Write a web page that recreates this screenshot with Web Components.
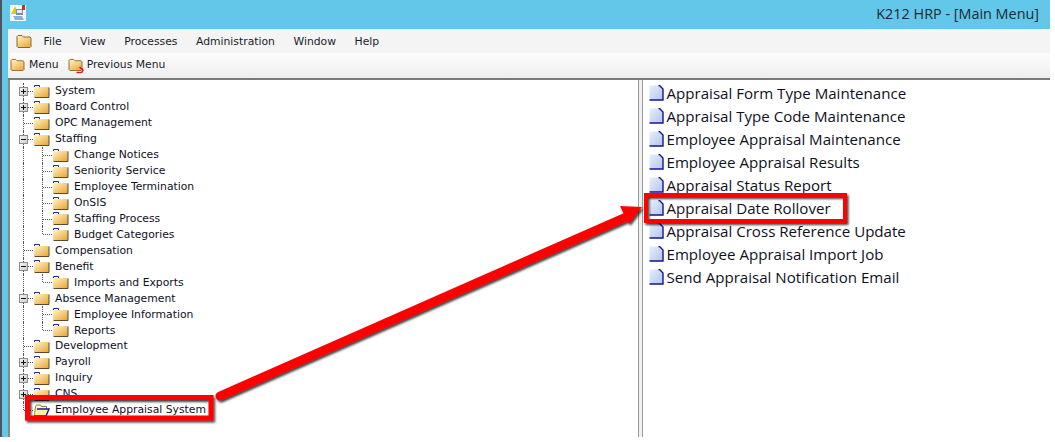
<!DOCTYPE html>
<html>
<head>
<meta charset="utf-8">
<title>K212 HRP - [Main Menu]</title>
<style>
  html, body { margin: 0; padding: 0; background: #fff; }
  body { width: 1055px; height: 442px; overflow: hidden; }
</style>
</head>
<body>
<hr-window>
  <hr-titlebar slot="title">K212 HRP - [Main Menu]</hr-titlebar>
  <hr-menubar slot="menu">
    <span>File</span><span>View</span><span>Processes</span><span>Administration</span><span>Window</span><span>Help</span>
  </hr-menubar>
  <hr-toolbar slot="tools"></hr-toolbar>
  <hr-tree slot="left">
    <tree-node expander="plus" label="System"></tree-node>
    <tree-node expander="plus" label="Board Control"></tree-node>
    <tree-node label="OPC Management"></tree-node>
    <tree-node expander="minus" label="Staffing"></tree-node>
    <tree-node level="1" label="Change Notices"></tree-node>
    <tree-node level="1" label="Seniority Service"></tree-node>
    <tree-node level="1" label="Employee Termination"></tree-node>
    <tree-node level="1" label="OnSIS"></tree-node>
    <tree-node level="1" label="Staffing Process"></tree-node>
    <tree-node level="1" last label="Budget Categories"></tree-node>
    <tree-node label="Compensation"></tree-node>
    <tree-node expander="minus" label="Benefit"></tree-node>
    <tree-node level="1" last label="Imports and Exports"></tree-node>
    <tree-node expander="minus" label="Absence Management"></tree-node>
    <tree-node level="1" label="Employee Information"></tree-node>
    <tree-node level="1" last label="Reports"></tree-node>
    <tree-node label="Development"></tree-node>
    <tree-node expander="plus" label="Payroll"></tree-node>
    <tree-node expander="plus" label="Inquiry"></tree-node>
    <tree-node expander="plus" label="CNS"></tree-node>
    <tree-node last open label="Employee Appraisal System"></tree-node>
  </hr-tree>
  <hr-list slot="right">
    <list-item>Appraisal Form Type Maintenance</list-item>
    <list-item>Appraisal Type Code Maintenance</list-item>
    <list-item>Employee Appraisal Maintenance</list-item>
    <list-item>Employee Appraisal Results</list-item>
    <list-item>Appraisal Status Report</list-item>
    <list-item>Appraisal Date Rollover</list-item>
    <list-item>Appraisal Cross Reference Update</list-item>
    <list-item>Employee Appraisal Import Job</list-item>
    <list-item>Send Appraisal Notification Email</list-item>
  </hr-list>
</hr-window>
<hr-annotations></hr-annotations>

<script>
const UI_FONT = '"DejaVu Sans", "Liberation Sans", sans-serif';

// shared folder drawing for the menu and toolbar
function folderSvg(w, h) {
    return `<svg width="${w}" height="${h}" viewBox="0 0 16 14">
        <defs><linearGradient id="fg" x1="0" y1="0" x2="0.6" y2="1">
            <stop offset="0" stop-color="#fff6c4"/><stop offset="1" stop-color="#eeb04a"/>
        </linearGradient></defs>
        <path d="M1 12.5V2.5L2 1.5H6L7.5 3H14L15 4V12.5L14 13.5H2Z" fill="url(#fg)" stroke="#8a6a2c" stroke-width="1"/>
    </svg>`;
}

class HrWindow extends HTMLElement {
    constructor() {
        super();
        this.attachShadow({ mode: 'open' });
        this.shadowRoot.innerHTML = `
        <style>
        :host { display: flex; flex-direction: column; width: 1050px; height: 437px; background: #63c7ea; border-left: 2px solid #4a5560; box-sizing: border-box; }
        .body { flex: 1; min-height: 0; margin-left: 6px; display: flex; flex-direction: column; background: #f0f0f0; }
        .panes { flex: 1; min-height: 0; display: flex; border-top: 2px solid #7a7a7a; background: #f0f0f0; }
        .left { width: 630px; flex: none; border-left: 2px solid #8a8a8a; background: #fff; box-sizing: border-box; }
        .split { width: 5px; flex: none; background: #f0f0f0; border-left: 1px solid #9a9a9a; border-right: 1px solid #9a9a9a; box-sizing: border-box; }
        .right { flex: 1; background: #fff; }
        </style>
        <slot name="title"></slot>
        <div class="body">
            <slot name="menu"></slot>
            <slot name="tools"></slot>
            <div class="panes">
                <div class="left"><slot name="left"></slot></div>
                <div class="split"></div>
                <div class="right"><slot name="right"></slot></div>
            </div>
        </div>
        `;
    }
}

class HrTitlebar extends HTMLElement {
    constructor() {
        super();
        this.attachShadow({ mode: 'open' });
        this.shadowRoot.innerHTML = `
        <style>
        :host { display: flex; align-items: center; justify-content: flex-end; height: 29px; flex: none; box-sizing: border-box; padding: 0 11px 3px 8px; font: 14.4px "Open Sans", ${UI_FONT}; color: #1a2a30; }
        svg { margin-right: auto; }
        </style>
        <svg width="16" height="16" viewBox="0 0 16 16">
            <rect width="16" height="16" fill="#f4fafd"/>
            <path d="M1 9L5 1L8 9Z" fill="#d9c92e"/>
            <rect x="6" y="4" width="7" height="6" fill="#7a8fa8"/>
            <rect x="7" y="5" width="5" height="3" fill="#e9eef5"/>
            <path d="M12 0h3v5h-3z" fill="#d8262a"/>
            <path d="M3 11h9l2 4H5z" fill="#7fb2e6"/>
        </svg>
        <slot></slot>
        `;
    }
}

class HrMenubar extends HTMLElement {
    constructor() {
        super();
        this.attachShadow({ mode: 'open' });
        this.shadowRoot.innerHTML = `
        <style>
        :host { display: flex; align-items: center; height: 24px; flex: none; gap: 18.5px; padding-left: 8px; background: #f4f4f4; font: 10.8px ${UI_FONT}; color: #1c1c2c; }
        svg { margin-right: -7px; }
        </style>
        ${folderSvg(16, 14)}
        <slot></slot>
        `;
    }
}

class HrToolbar extends HTMLElement {
    constructor() {
        super();
        this.attachShadow({ mode: 'open' });
        this.shadowRoot.innerHTML = `
        <style>
        :host { display: flex; align-items: center; height: 25px; flex: none; box-sizing: border-box; padding: 0 0 2px 2px; background: linear-gradient(#fdfdfd, #eeeeee); font: 10.8px ${UI_FONT}; color: #1c1c2c; }
        .btn { display: flex; align-items: center; gap: 4px; margin-right: 9px; position: relative; }
        .undo { position: absolute; left: 7px; top: 7px; }
        </style>
        <div class="btn">${folderSvg(15, 13)}<span>Menu</span></div>
        <div class="btn">
            ${folderSvg(15, 13)}
            <svg class="undo" width="9" height="9" viewBox="0 0 9 9"><path d="M1.5 7.5H5.5A2 2 0 0 0 6 3.5L4.5 2" fill="none" stroke="#e0181c" stroke-width="1.6"/></svg>
            <span>Previous Menu</span>
        </div>
        `;
    }
}

class HrTree extends HTMLElement {
    constructor() {
        super();
        this.attachShadow({ mode: 'open' });
        this.shadowRoot.innerHTML = `
        <style>
        :host { display: flex; flex-direction: column; padding: 3px 0 0 4px; font: 10.8px ${UI_FONT}; color: #10101c; }
        </style>
        <slot></slot>
        `;
    }
}

class TreeNode extends HTMLElement {
    constructor() {
        super();
        this.attachShadow({ mode: 'open' });
    }

    connectedCallback() {
        const level = parseInt(this.getAttribute('level') || '0');
        const expander = this.getAttribute('expander');
        const last = this.hasAttribute('last');
        const open = this.hasAttribute('open');

        let cells = '';
        if (level === 1) {
            cells += '<div class="cell"><i class="v"></i></div>';
        }
        cells += `<div class="cell">
            <i class="v ${last ? 'half' : ''}"></i><i class="h"></i>
            ${expander ? `<b class="exp ${expander}"></b>` : ''}
        </div>`;

        const icon = open
            ? `<svg width="17" height="14" viewBox="0 0 17 14">
                <path d="M1.5 12.5L2.5 3.5L3.5 2H7.5L8.5 3.5H13.5V6" fill="#fff6c0" stroke="#8a7a40"/>
                <path d="M1 13L4 6H16L13 13Z" fill="#fff0a0"/>
                <path d="M4 6H16L13 13H1" fill="none" stroke="#101a9a" stroke-width="1.4"/>
               </svg>`
            : `<svg width="17" height="14" viewBox="0 0 17 14">
                <defs><linearGradient id="t" x1="0" y1="0" x2="1" y2="1">
                    <stop offset="0" stop-color="#fff6c8"/><stop offset="1" stop-color="#e9a233"/>
                </linearGradient></defs>
                <path d="M1.5 3V1.5H6.5V3" fill="none" stroke="#1a2a9a"/>
                <rect x="1" y="3" width="15" height="10" fill="url(#t)"/>
                <path d="M1.5 13.5H16V3.5" fill="none" stroke="#5a4a30"/>
               </svg>`;

        this.shadowRoot.innerHTML = `
        <style>
        :host { display: flex; align-items: center; height: 15.95px; flex: none; }
        .cell { position: relative; width: 19px; height: 100%; flex: none; }
        .v { position: absolute; left: 9px; top: 0; bottom: 0; border-left: 1px dotted #555; }
        .v.half { bottom: 8px; }
        .h { position: absolute; left: 10px; right: 0; top: 8px; border-top: 1px dotted #555; }
        .exp { position: absolute; left: 5px; top: 4px; width: 9px; height: 9px; box-sizing: border-box; border: 1px solid #8c8c8c; background: linear-gradient(135deg, #f4f4f4, #cfcfcf); }
        .exp::before { content: ""; position: absolute; left: 1px; top: 3px; width: 5px; height: 1px; background: #111; }
        .exp.plus::after { content: ""; position: absolute; left: 3px; top: 1px; width: 1px; height: 5px; background: #111; }
        svg { flex: none; }
        span { margin-left: 5px; white-space: nowrap; }
        </style>
        ${cells}${icon}<span>${this.getAttribute('label')}</span>
        `;
    }
}

class HrList extends HTMLElement {
    constructor() {
        super();
        this.attachShadow({ mode: 'open' });
        this.shadowRoot.innerHTML = `
        <style>
        :host { display: flex; flex-direction: column; padding: 2px 0 0 6px; font: 15.1px "Open Sans", ${UI_FONT}; color: #10101c; }
        </style>
        <slot></slot>
        `;
    }
}

class ListItem extends HTMLElement {
    constructor() {
        super();
        this.attachShadow({ mode: 'open' });
        this.shadowRoot.innerHTML = `
        <style>
        :host { display: flex; align-items: center; gap: 2.5px; height: 22.9px; flex: none; white-space: nowrap; }
        svg { flex: none; }
        </style>
        <svg width="15" height="16" viewBox="0 0 15 16">
            <defs><linearGradient id="d" x1="0" y1="0" x2="1" y2="1">
                <stop offset="0" stop-color="#e4f0fc"/><stop offset="1" stop-color="#b4c4f0"/>
            </linearGradient></defs>
            <path d="M0.5 0.5H10.5L14 4V15H0.5Z" fill="url(#d)"/>
            <path d="M9.5 0.5H10.5L14 4V15H0.5" fill="none" stroke="#14148c" stroke-width="1.4"/>
        </svg>
        <slot></slot>
        `;
    }
}

// red callouts drawn over the screenshot
class HrAnnotations extends HTMLElement {
    constructor() {
        super();
        this.attachShadow({ mode: 'open' });
        this.shadowRoot.innerHTML = `
        <style>
        :host { display: block; position: absolute; left: 0; top: 0; width: 1055px; height: 442px; pointer-events: none; }
        svg { display: block; }
        </style>
        <svg width="1055" height="442" viewBox="0 0 1055 442">
            <defs><filter id="s" x="-10%" y="-10%" width="120%" height="120%">
                <feDropShadow dx="1.5" dy="2" stdDeviation="1.2" flood-color="#000" flood-opacity="0.75"/>
            </filter></defs>
            <g filter="url(#s)">
                <rect x="27.5" y="397.5" width="183.5" height="20.5" fill="none" stroke="#f00" stroke-width="5"/>
                <rect x="646" y="195" width="199" height="26" fill="none" stroke="#f00" stroke-width="4"/>
                <path d="M220 396L626 217" stroke="#f00" stroke-width="9" stroke-linecap="round" fill="none"/>
                <path d="M642 207L620 206L629 224Z" fill="#f00"/>
            </g>
        </svg>
        `;
    }
}

customElements.define('hr-window', HrWindow);
customElements.define('hr-titlebar', HrTitlebar);
customElements.define('hr-menubar', HrMenubar);
customElements.define('hr-toolbar', HrToolbar);
customElements.define('hr-tree', HrTree);
customElements.define('tree-node', TreeNode);
customElements.define('hr-list', HrList);
customElements.define('list-item', ListItem);
customElements.define('hr-annotations', HrAnnotations);
</script>
</body>
</html>
